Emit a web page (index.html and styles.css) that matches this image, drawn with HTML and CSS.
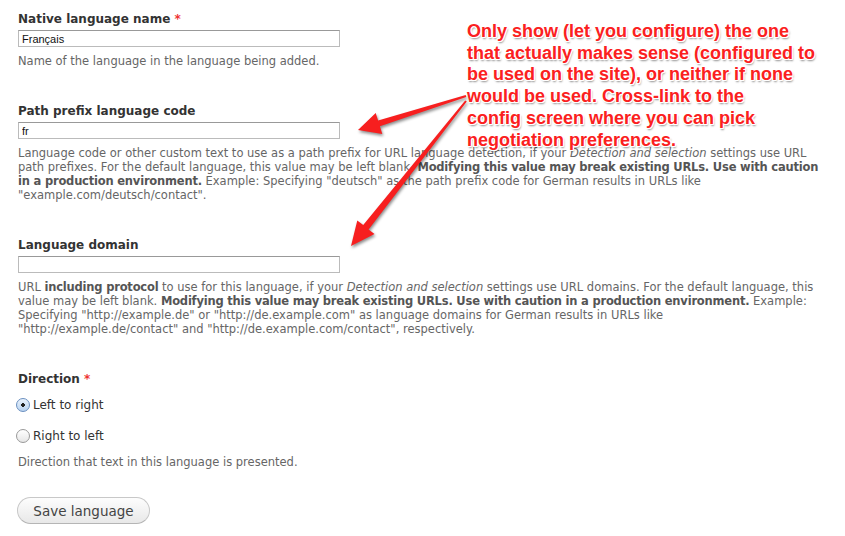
FILE: index.html
```html
<!DOCTYPE html>
<html>
<head>
<meta charset="utf-8">
<link rel="stylesheet" href="styles.css">
</head>
<body>
<div class="page">
  <form class="form">
    <div class="item">
      <label class="label">Native language name <span class="req">*</span></label>
      <input class="text" type="text" value="Français">
      <div class="desc">Name of the language in the language being added.</div>
    </div>
    <div class="item">
      <label class="label">Path prefix language code</label>
      <input class="text" type="text" value="fr">
      <div class="desc">Language code or other custom text to use as a path prefix for URL language detection, if your <em>Detection and selection</em> settings use URL path prefixes. For the default language, this value may be left blank. <strong>Modifying this value may break existing URLs. Use with caution in a production environment.</strong> Example: Specifying "deutsch" as the path prefix code for German results in URLs like "example.com/deutsch/contact".</div>
    </div>
    <div class="item">
      <label class="label">Language domain</label>
      <input class="text" type="text" value="">
      <div class="desc">URL <strong>including protocol</strong> to use for this language, if your <em>Detection and selection</em> settings use URL domains. For the default language, this value may be left blank. <strong>Modifying this value may break existing URLs. Use with caution in a production environment.</strong> Example: Specifying "http://example.de" or "http://de.example.com" as language domains for German results in URLs like "http://example.de/contact" and "http://de.example.com/contact", respectively.</div>
    </div>
    <div class="item">
      <label class="label">Direction <span class="req">*</span></label>
      <div class="radios">
        <label class="radio"><span class="dot on"></span>Left to right</label>
        <label class="radio"><span class="dot"></span>Right to left</label>
      </div>
      <div class="desc desc-radios">Direction that text in this language is presented.</div>
    </div>
    <div class="actions">
      <button type="button" class="button">Save language</button>
    </div>
  </form>

  <div class="note">Only show (let you configure) the one<br>that actually makes sense (configured to<br>be used on the site), or neither if none<br>would be used. Cross-link to the<br>config screen where you can pick<br>negotiation preferences.</div>

  <svg class="arrows" width="845" height="536" viewBox="0 0 845 536">
    <polygon points="465.7,95 378.1,120.5 375.7,112.9 358,130 382.3,133.9 379.9,126.3 466.3,97" fill="#f71f1f"/>
    <polygon points="465.2,100.4 363.2,225 357.3,220.4 351,246 374.5,234 368.6,229.4 466.8,101.6" fill="#f71f1f"/>
  </svg>
</div>
</body>
</html>
```
FILE: styles.css
```css
html, body {
  margin: 0;
  padding: 0;
  background: #fff;
}
.page {
  position: relative;
  width: 845px;
  height: 536px;
  overflow: hidden;
  font-family: "DejaVu Sans", "Liberation Sans", sans-serif;
  color: #333;
}
.form {
  padding: 10px 0 0 18px;
  width: 806px;
}
.item {
  margin-bottom: 34px;
}
.label {
  display: block;
  font-weight: bold;
  font-size: 12px;
  line-height: 18px;
  color: #333;
}
.req {
  color: #e33;
}
.text {
  display: block;
  box-sizing: border-box;
  margin: 2px 0 0;
  width: 322px;
  height: 17px;
  padding: 0 3px;
  border: 1px solid #bbb;
  border-top-color: #999;
  font-family: "Liberation Sans", sans-serif;
  font-size: 11px;
  color: #111;
  outline: none;
}
.desc {
  margin-top: 7px;
  font-size: 11.5px;
  line-height: 14px;
  color: #666;
}
.desc strong {
  color: #555;
  letter-spacing: -0.2px;
}
.desc-radios {
  margin-top: 9px;
}
.radios {
  display: flex;
  flex-direction: column;
  gap: 11px;
  margin-top: 7px;
}
.radio {
  display: flex;
  align-items: center;
  gap: 3px;
  font-size: 12px;
  line-height: 20px;
  color: #333;
  margin-left: -2px;
}
.dot {
  position: relative;
  width: 12px;
  height: 12px;
  border-radius: 50%;
  border: 1px solid #999;
  background: linear-gradient(#fff, #e6e6e6);
}
.dot.on {
  border-color: #6a8fc0;
  background: radial-gradient(circle, #222 0 1.6px, transparent 2px), linear-gradient(#eaf3fd, #b9d3f0);
}
.actions {
  margin-top: -6px;
}
.button {
  box-sizing: border-box;
  width: 133px;
  height: 27px;
  border: 1px solid #c8c8c8;
  border-bottom-color: #b5b5b5;
  border-radius: 14px;
  background: linear-gradient(#fdfdfd, #e8e8e8);
  font-family: "DejaVu Sans", sans-serif;
  font-size: 13.5px;
  color: #444;
  margin-left: -1px;
  padding: 0;
}
.note {
  position: absolute;
  left: 467px;
  top: 21px;
  font-family: "Liberation Sans", sans-serif;
  font-weight: bold;
  font-size: 18px;
  line-height: 21.7px;
  color: #fb2020;
  text-shadow:
    1px 0 0 #fff, -1px 0 0 #fff, 0 1px 0 #fff, 0 -1px 0 #fff,
    1px 1px 0 #fff, -1px -1px 0 #fff, 1px -1px 0 #fff, -1px 1px 0 #fff,
    1px 2px 2px rgba(0,0,0,0.45);
}
.arrows {
  position: absolute;
  left: 0;
  top: 0;
  filter: drop-shadow(1px 2px 1.5px rgba(0,0,0,0.45));
}
```
